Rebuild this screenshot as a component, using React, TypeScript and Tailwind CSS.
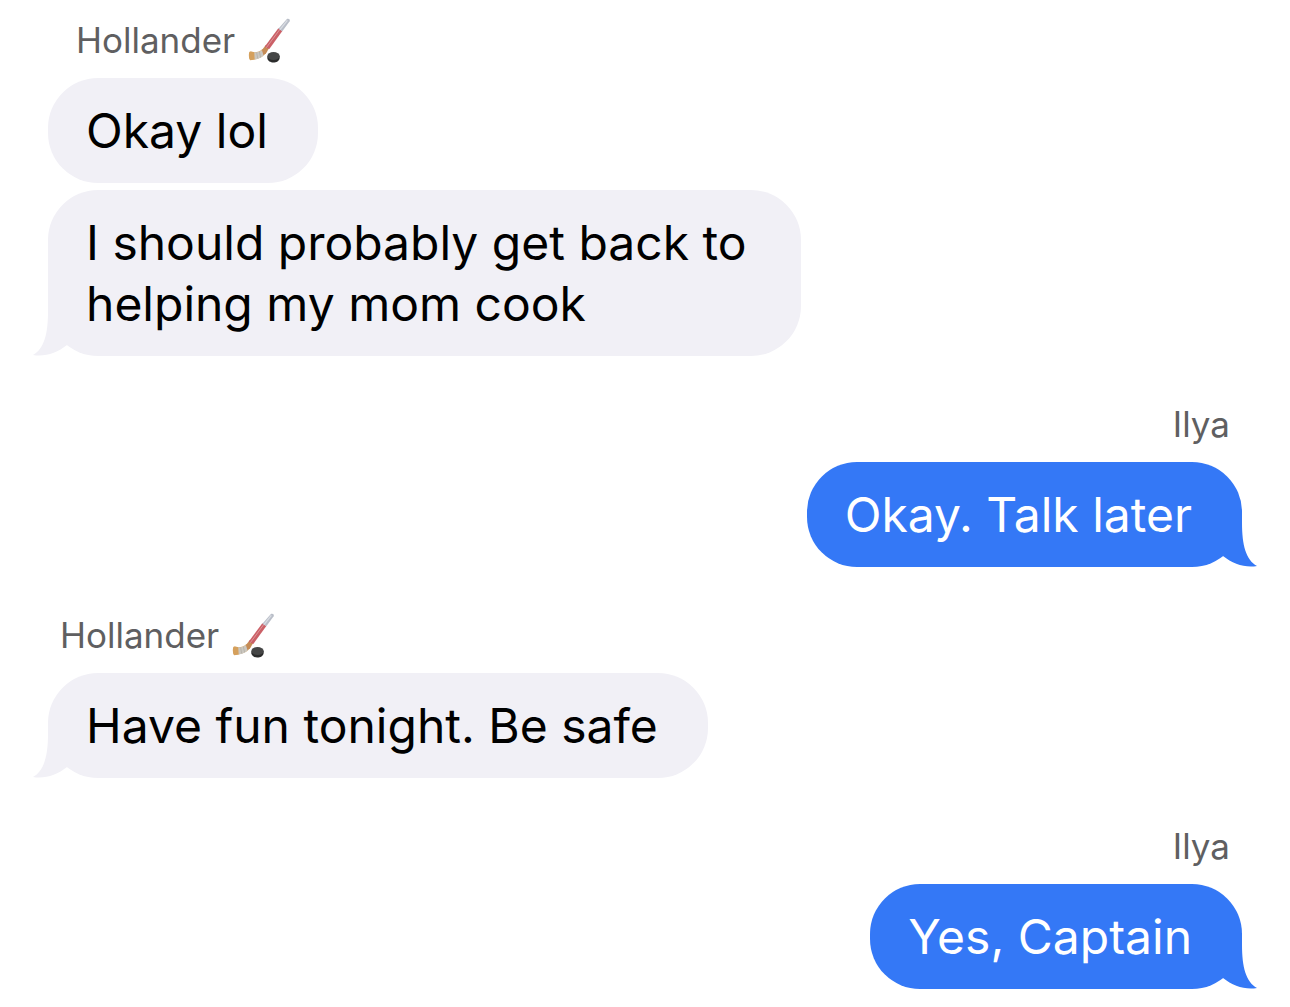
import clsx from "clsx"

type Side = "in" | "out"

type Group = {
  sender: string
  side: Side
  hockey?: boolean
  messages: string[]
}

const groups: Group[] = [
  {
    sender: "Hollander",
    side: "in",
    hockey: true,
    messages: ["Okay lol", "I should probably get back to helping my mom cook"],
  },
  { sender: "Ilya", side: "out", messages: ["Okay. Talk later"] },
  {
    sender: "Hollander",
    side: "in",
    hockey: true,
    messages: ["Have fun tonight. Be safe"],
  },
  { sender: "Ilya", side: "out", messages: ["Yes, Captain"] },
]

function HockeyIcon() {
  return (
    <svg width="44" height="46" viewBox="24 18 132 138" role="img" aria-label="hockey stick and puck">
      <path
        d="M70 114 L85 120 C76 137 60 145 36 147 C29 147 28 125 33 122 C48 125 60 124 70 114Z"
        fill="#d9b078"
      />
      <path d="M32 122 C36 121 42 123 46 124 L48 145 L35 148 C29 147 28 125 32 122Z" fill="#d5a05c" />
      <path d="M46 124 C55 125 63 122 70 117 L75 132 C67 140 58 144 47 145Z" fill="#cbc7c0" />
      <path d="M53 125 L56 142 M61 122 L65 139" stroke="#aeaaa2" strokeWidth="2" />
      <path d="M69 117 L81 101 L92 109 L81 127 L73 132Z" fill="#c58b55" />
      <path d="M118 52 L130 60 L91 114 L84 111 L77 107Z" fill="#cb6067" />
      <path d="M122 56 L82 110" stroke="#dc979a" strokeWidth="3" />
      <path d="M143 25 C148 21 155 26 152 31 L130 61 L118 53Z" fill="#b9bec8" />
      <path d="M145 28 L123 56" stroke="#d9dce2" strokeWidth="4" />
      <path d="M85 136 V142 C87 159 120 159 122 141 V134Z" fill="#2b2c2c" />
      <ellipse cx="103.500" cy="135" rx="18.500" ry="12" fill="#454646" />
    </svg>
  )
}

function Tail({ side }: { side: Side }) {
  return (
    <svg
      width="66"
      height="56"
      viewBox="0 0 66 56"
      aria-hidden="true"
      className={clsx(
        "absolute bottom-0",
        side === "in" ? "-left-4 text-[#f1f0f6]" : "-right-4 -scale-x-100 text-[#3478f6]"
      )}
    >
      <path d="M16 0 V12 C16 34 12 49 1 55 C13 57 25 53 35 45 L60 20 V0Z" fill="currentColor" />
    </svg>
  )
}

function Bubble({ text, side, tail }: { text: string; side: Side; tail: boolean }) {
  return (
    <div
      className={clsx(
        "relative max-w-[753px] rounded-[50px] py-[22px] pr-[50px] pl-[38px] text-[48px] leading-[61px]",
        side === "in" ? "bg-[#f1f0f6] text-black" : "bg-[#3478f6] text-white"
      )}
    >
      {tail && <Tail side={side} />}
      <p className="relative">{text}</p>
    </div>
  )
}

export default function App() {
  return (
    <main className="flex flex-col gap-[46px] bg-white px-12 py-[18px] font-['Inter',sans-serif]">
      {groups.map((group, i) => (
        <section
          key={i}
          className={clsx("flex flex-col", group.side === "in" ? "items-start" : "items-end")}
        >
          <h2
            className={clsx(
              "mb-4 flex h-11 items-center gap-3 text-[35px] leading-[44px] text-[#5f5f61]",
              group.side === "out" && "pr-3",
              group.side === "in" && (group.messages.length > 1 ? "pl-7" : "pl-3")
            )}
          >
            {group.sender}
            {group.hockey && <HockeyIcon />}
          </h2>
          <div
            className={clsx("flex flex-col gap-[7px]", group.side === "in" ? "items-start" : "items-end")}
          >
            {group.messages.map((text, j) => (
              <Bubble key={j} text={text} side={group.side} tail={j === group.messages.length - 1} />
            ))}
          </div>
        </section>
      ))}
    </main>
  )
}
